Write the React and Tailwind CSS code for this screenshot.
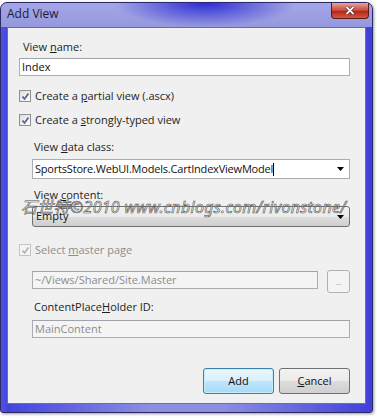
import React from 'react';

const font = "font-['Open_Sans','Noto_Sans',sans-serif]";

const CheckBox = ({ disabled }) => (
    <span className={`inline-flex items-center justify-center w-[12px] h-[12px] border ${disabled ? 'border-[#c4c4c4] bg-[#f4f4f4]' : 'border-[#8e8f8f] bg-gradient-to-br from-[#dcdcdc] to-[#ffffff]'}`}>
        <svg width="9" height="9" viewBox="0 0 9 9">
            <path d="M1.5 4.5 L3.5 7 L7.5 1.5" fill="none" stroke={disabled ? '#b0b0b0' : '#4a5f97'} strokeWidth="1.6" />
        </svg>
    </span>
);

const Arrow = () => (
    <svg width="7" height="4" viewBox="0 0 7 4"><path d="M0 0 H7 L3.5 4 Z" fill="#000" /></svg>
);

const Label = ({ children, className = '' }) => (
    <div className={`h-[14px] leading-[14px] text-[11px] text-[#1e1e1e] ${className}`}>{children}</div>
);

const TextBox = ({ value, disabled, className = '' }) => (
    <div className={`h-[18px] border border-[#abadb3] border-t-[#a0a3aa] ${disabled ? 'bg-[#f4f4f4] text-[#8d8d8d]' : 'bg-white text-[#111]'} text-[11px] leading-[16px] px-[2px] ${className}`}>
        {value}
    </div>
);

const App = () => {
    return (
        <div className={`w-[377px] h-[418px] bg-white relative overflow-hidden ${font}`}>
            {/* window frame */}
            <div className="mt-[2px] w-[373px] h-[411px] rounded-t-[7px] rounded-b-[3px] border border-[#2a2a6a] flex flex-col bg-[linear-gradient(to_right,#5252e0_0px,#4444dc_7px,#8c8ee0_40%,#8c8ee0_60%,#4040d8_100%)] shadow-[1px_1px_3px_rgba(0,0,0,0.4)]">
                {/* title bar */}
                <div className="h-[24px] flex items-start justify-between rounded-t-[6px] bg-[radial-gradient(ellipse_90px_24px_at_55%_0%,#2a2ad4,transparent),linear-gradient(to_bottom,#a4a6e6,#9698de)]">
                    <span className="pl-[6px] pt-[4px] text-[12px] leading-[14px] text-[#1b1b3a]">Add View</span>
                    <div className="mr-[3px] w-[38px] h-[16px] rounded-b-[4px] border border-t-0 border-[#5a1a1a] bg-[linear-gradient(to_bottom,#e8a59a,#c8473a_50%,#b3261a_55%,#d25a3e)] flex items-center justify-center">
                        <svg width="10" height="9" viewBox="0 0 10 9">
                            <path d="M1.5 1 L8.5 8 M8.5 1 L1.5 8" stroke="#3a1010" strokeWidth="3" />
                            <path d="M1.5 1 L8.5 8 M8.5 1 L1.5 8" stroke="#fff" strokeWidth="1.8" />
                        </svg>
                    </div>
                </div>

                {/* client area */}
                <div className="relative mx-[6px] mb-[8px] flex-1 border border-[#6a6ab0] bg-[#f0f0f0] pl-[11px] pr-[15px] flex flex-col">
                    <Label className="mt-[12px] pl-[4px]">View <u>n</u>ame:</Label>
                    <TextBox value="Index" className="mt-[4px]" />

                    <div className="mt-[13px] h-[14px] flex items-center gap-[4px] text-[11px] text-[#1e1e1e]">
                        <CheckBox />
                        <span>Create a <u>p</u>artial view (.ascx)</span>
                    </div>
                    <div className="mt-[10px] h-[14px] flex items-center gap-[4px] text-[11px] text-[#1e1e1e]">
                        <CheckBox />
                        <span>Create a <u>s</u>trongly-typed view</span>
                    </div>

                    <div className="pl-[13px] flex flex-col">
                        <Label className="mt-[13px] pl-[2px]">View <u>d</u>ata class:</Label>
                        <div className="mt-[5px] h-[20px] border border-[#abadb3] bg-white flex items-center justify-between pl-[2px] pr-[5px]">
                            <span className="text-[11px] tracking-[-0.2px] text-[#111]">SportsStore.WebUI.Models.CartIndexViewModel<span className="inline-block w-px h-[13px] bg-black align-middle"></span></span>
                            <Arrow />
                        </div>

                        <Label className="mt-[9px] pl-[2px]">View <u>c</u>ontent:</Label>
                        <div className="mt-[4px] h-[21px] rounded-[3px] border border-[#707070] bg-[linear-gradient(to_bottom,#f2f2f2_0%,#ebebeb_50%,#dddddd_50%,#cfcfcf_100%)] flex items-center justify-between pl-[3px] pr-[5px]">
                            <span className="text-[11px] text-[#111]">Empty</span>
                            <Arrow />
                        </div>
                    </div>

                    <div className="mt-[16px] h-[14px] flex items-center gap-[4px] text-[11px] text-[#8d8d8d]">
                        <CheckBox disabled />
                        <span>Select <u>m</u>aster page</span>
                    </div>

                    <div className="pl-[13px] flex flex-col">
                        <div className="mt-[13px] flex items-start gap-[9px]">
                            <TextBox value="~/Views/Shared/Site.Master" disabled className="mt-[1px] flex-1" />
                            <div className="w-[23px] h-[23px] rounded-[3px] border border-[#adb2b5] bg-[#f4f4f4] flex items-center justify-center text-[8px] text-[#9a9a9a] leading-none">...</div>
                        </div>
                        <Label className="mt-[7px] pl-[2px]">ContentPlace<u>H</u>older ID:</Label>
                        <TextBox value="MainContent" disabled className="mt-[6px]" />
                    </div>

                    <div className="mt-[30px] flex justify-end gap-[5px]">
                        <button className="w-[71px] h-[26px] rounded-[3px] border border-[#3c7fb1] shadow-[inset_0_0_0_1px_#c9ecfc] bg-[linear-gradient(to_bottom,#eaf6fd_0%,#d9f0fc_50%,#bee6fd_50%,#a7d9f5_100%)] text-[11px] text-[#111]">
                            Add
                        </button>
                        <button className="w-[71px] h-[26px] rounded-[3px] border border-[#707070] bg-[linear-gradient(to_bottom,#f2f2f2_0%,#ebebeb_50%,#dddddd_50%,#cfcfcf_100%)] text-[11px] text-[#111]">
                            <u>C</u>ancel
                        </button>
                    </div>

                    {/* watermark */}
                    <div className="absolute left-[13px] top-[169px] text-[16px] leading-[20px] italic tracking-[0.3px] text-[rgba(255,255,255,0.35)] [-webkit-text-stroke:0.6px_#555] font-['Noto_Sans','Noto_Sans_CJK_SC',sans-serif] whitespace-nowrap">
                        石世特©2010 www.cnblogs.com/rivonstone/
                    </div>
                </div>
            </div>
        </div>
    );
};

export default App;
